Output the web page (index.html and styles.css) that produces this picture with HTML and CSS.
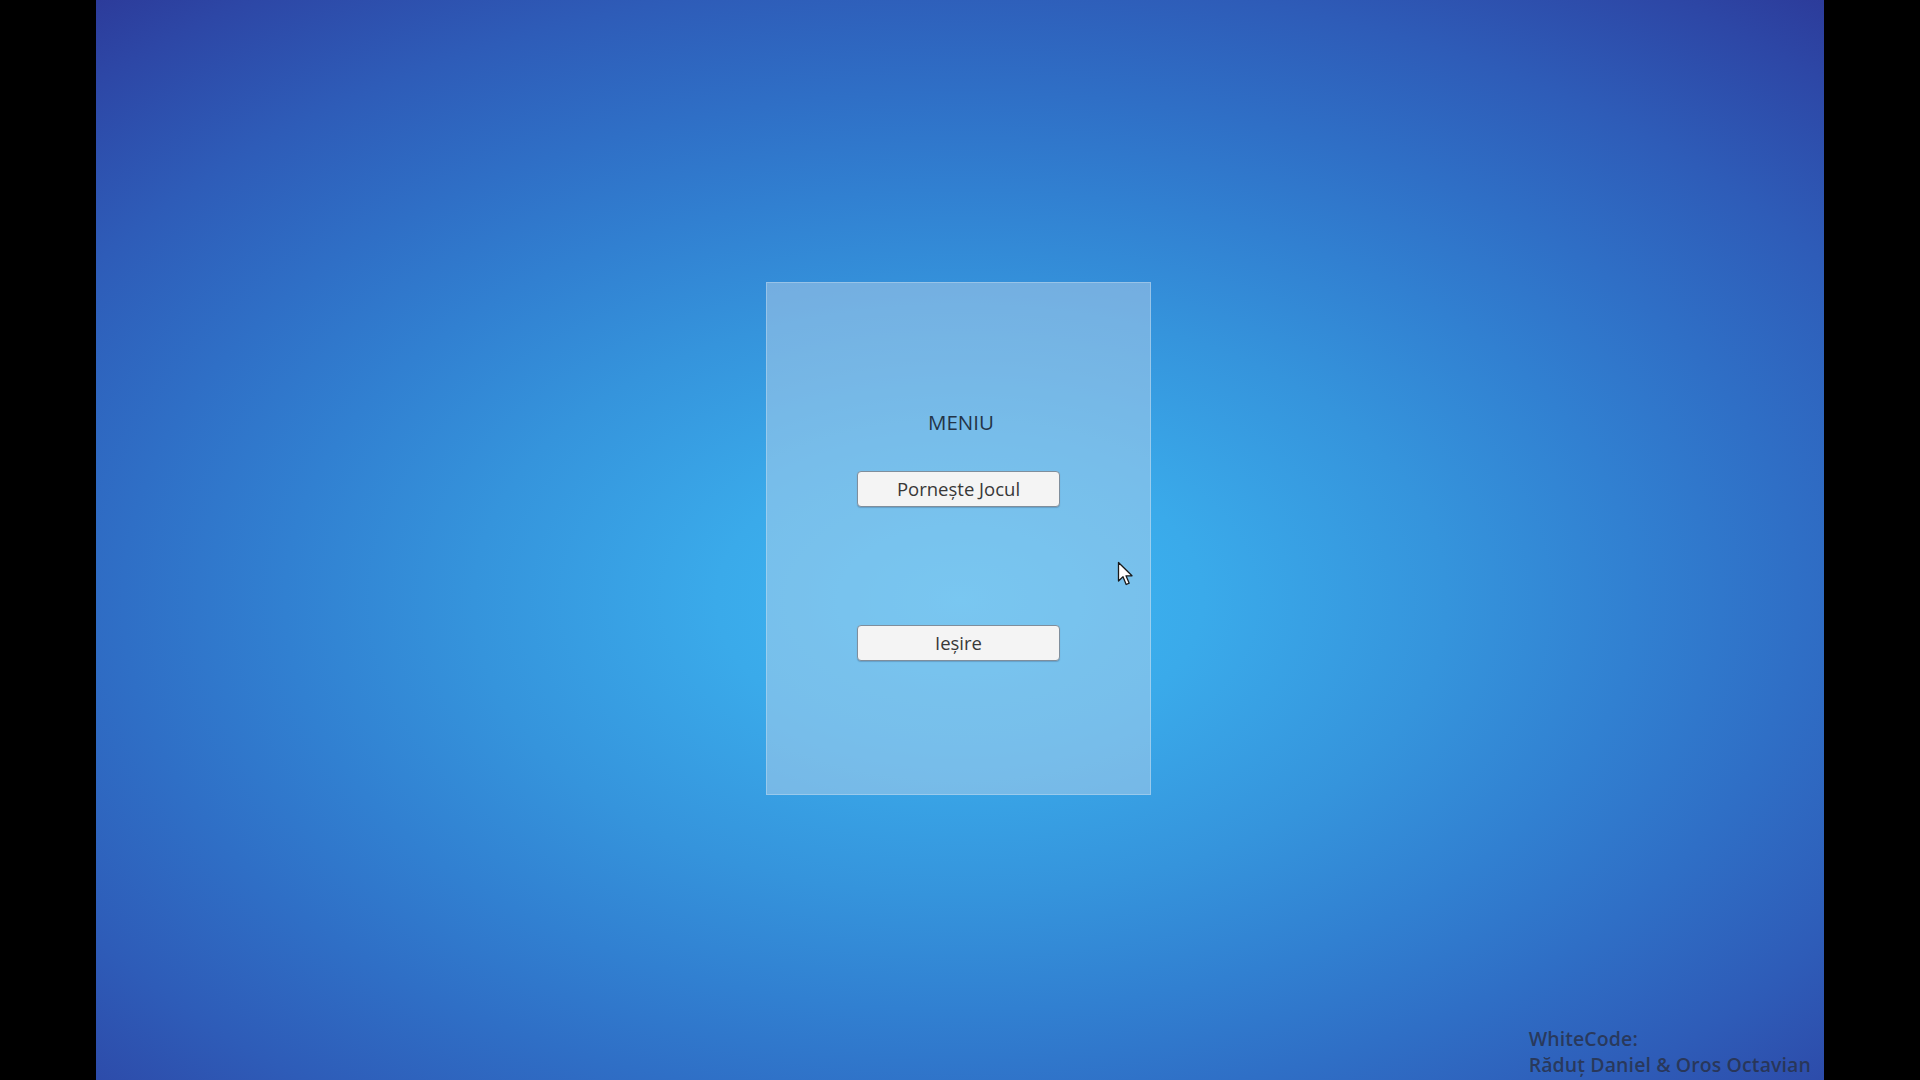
FILE: index.html
```html
<!DOCTYPE html>
<html lang="ro">
<head>
<meta charset="utf-8">
<title>Meniu</title>
<link rel="stylesheet" href="styles.css">
</head>
<body>
<div class="screen">
  <main class="stage">
    <section class="panel">
      <h1 class="title">MENIU</h1>
      <button class="btn btn-start">Porneşte Jocul</button>
      <button class="btn btn-exit">Ieşire</button>
    </section>
    <footer class="credits">
      <div>WhiteCode:</div>
      <div>Răduţ Daniel &amp; Oros Octavian</div>
    </footer>
    <svg class="cursor" width="18" height="28" viewBox="0 0 18 28" aria-hidden="true">
      <path d="M1.5 1.5 L1.5 20 L6 15.8 L9.2 23.5 L12.2 22.2 L9 14.8 L15 14.8 Z" fill="#ffffff" stroke="#1a1a1a" stroke-width="1.3" stroke-linejoin="round"/>
    </svg>
  </main>
</div>
</body>
</html>
```
FILE: styles.css
```css
* { box-sizing: border-box; }

html, body {
  margin: 0;
  padding: 0;
  width: 1920px;
  height: 1080px;
  background: #000;
  overflow: hidden;
}

.screen {
  width: 1920px;
  height: 1080px;
  display: flex;
  justify-content: center;
  background: #000;
}

.stage {
  position: relative;
  width: 1728px;
  height: 1080px;
  display: grid;
  grid-template-columns: 1fr;
  grid-template-rows: 1fr;
  background:
    radial-gradient(ellipse 1350px 820px at 864px 600px,
      #3db8f4 0%,
      #3aaaea 18%,
      #3594dc 36%,
      #3180d1 50%,
      #2f6fc6 62%,
      #2e5cb8 76%,
      #2d47a6 90%,
      #2c3796 100%);
  font-family: "Comic Sans MS", "Open Sans", "DejaVu Sans", sans-serif;
}

.panel {
  grid-area: 1 / 1;
  place-self: center;
  width: 385px;
  height: 513px;
  margin-left: -3px;
  margin-top: -3px;
  background: rgba(205, 220, 235, 0.42);
  border: 1px solid rgba(220, 235, 245, 0.35);
  display: flex;
  flex-direction: column;
  align-items: center;
  padding-top: 127px;
}

.title {
  margin: 0 0 37px 0;
  font-size: 20.5px;
  line-height: 24px;
  font-weight: 500;
  color: #243447;
  padding-left: 5px;
}

.btn {
  width: 203px;
  height: 36px;
  padding: 0;
  background: #f4f4f4;
  border: 1px solid #7f8e9c;
  border-radius: 4px;
  box-shadow: 0 1px 1px rgba(40, 60, 90, 0.25);
  font-family: inherit;
  font-size: 18.5px;
  color: #383838;
  line-height: 34px;
}

.btn-exit {
  margin-top: 118px;
}

.credits {
  grid-area: 1 / 1;
  align-self: end;
  justify-self: end;
  margin: 0 13px 2px 0;
  font-size: 19.5px;
  line-height: 26px;
  letter-spacing: 0.1px;
  font-weight: 600;
  color: rgba(40, 48, 70, 0.82);
  white-space: nowrap;
}

.cursor {
  position: absolute;
  left: 1021px;
  top: 561px;
}
```
